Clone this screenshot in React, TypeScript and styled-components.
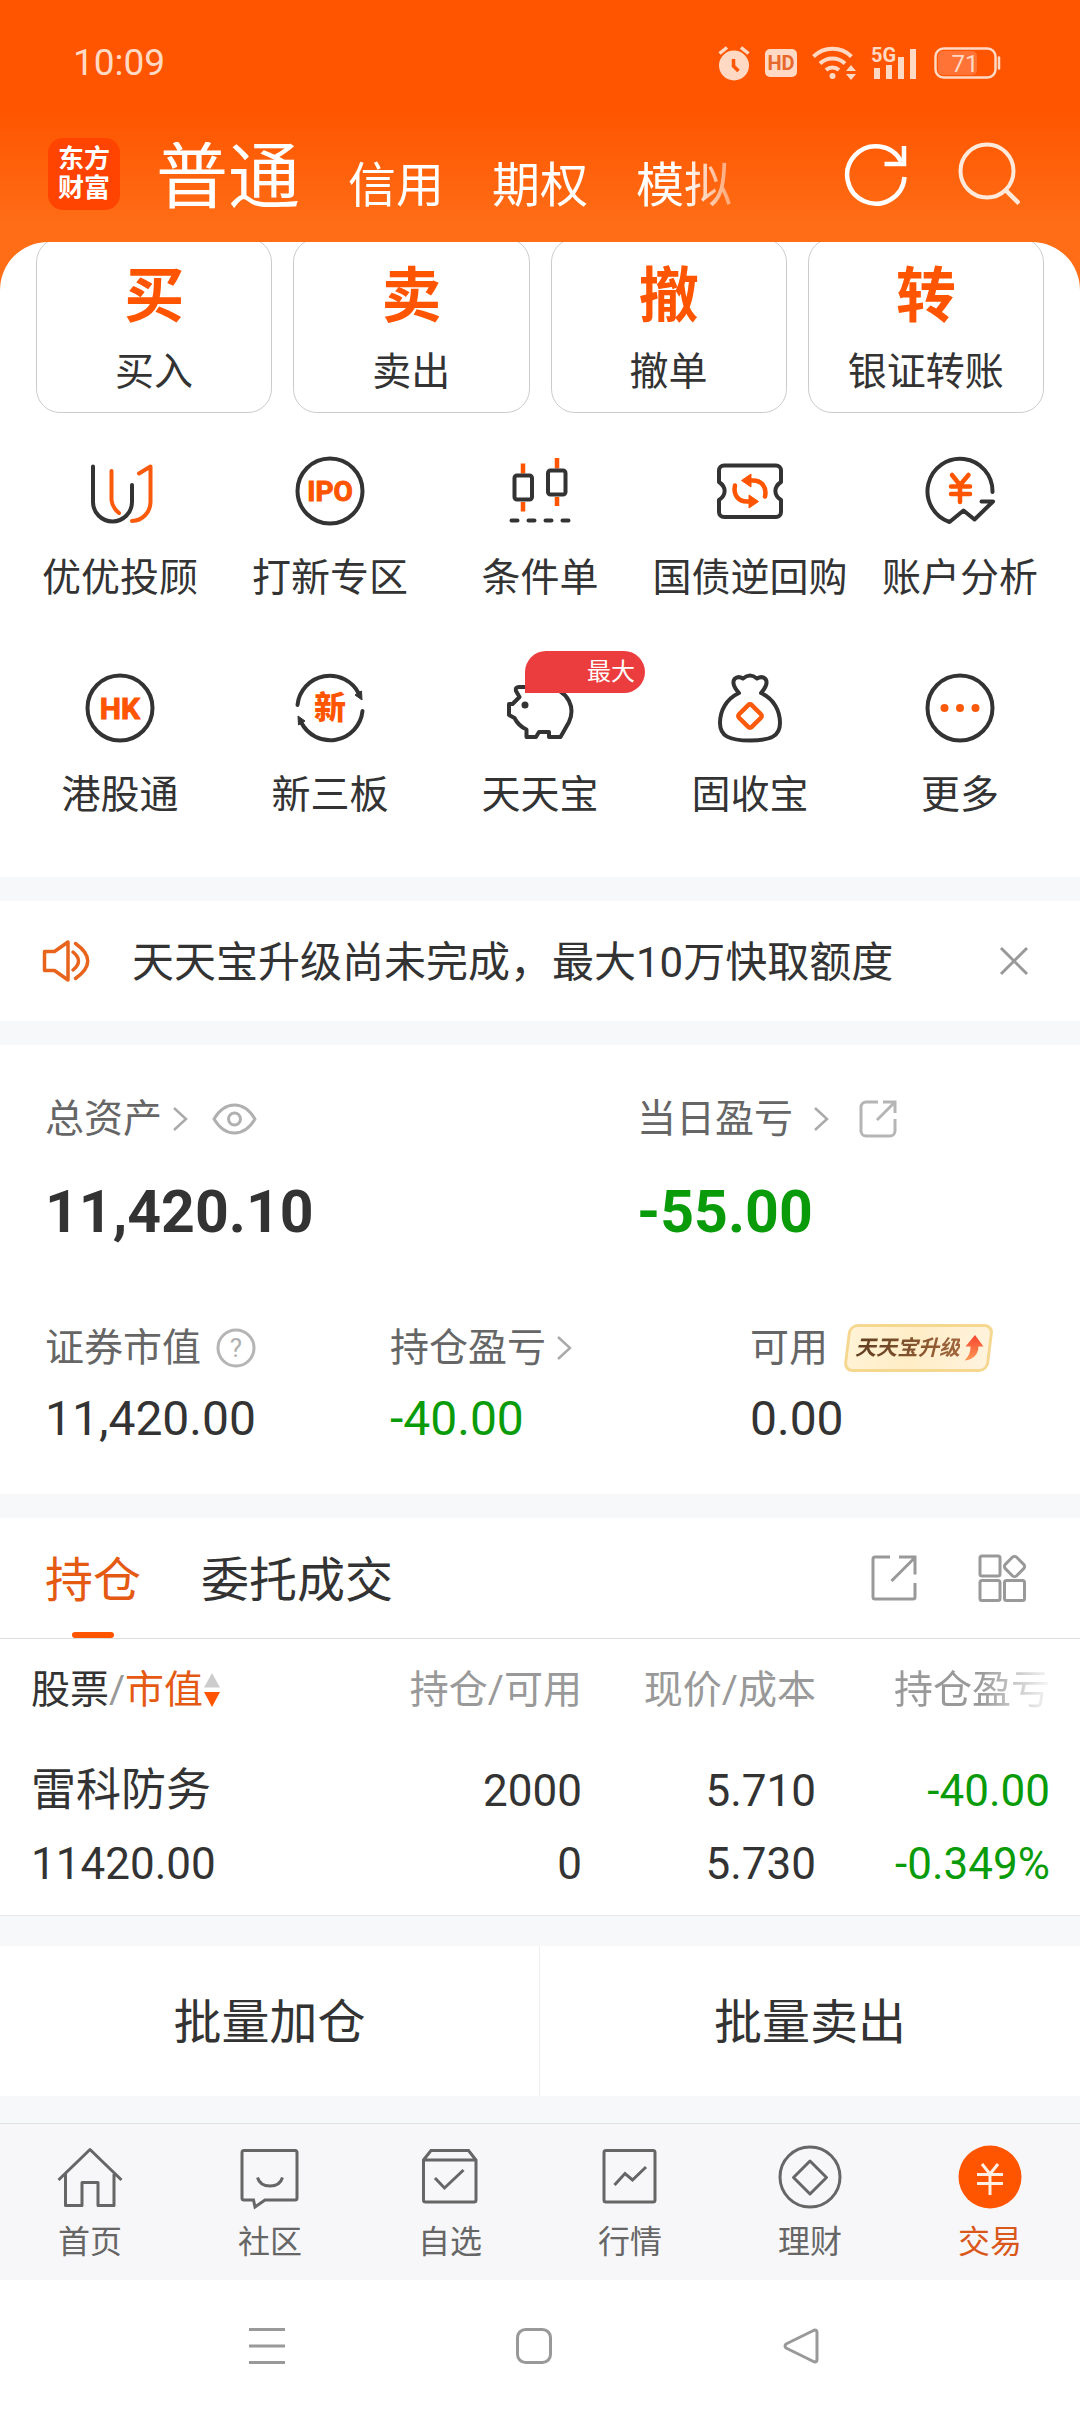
import React from 'react';
import styled, { createGlobalStyle, css } from 'styled-components';

const color = {
  brand: '#ff5500',
  brandText: '#e55a12',
  ink: '#333333',
  label: '#666666',
  muted: '#999999',
  line: '#dddddd',
  gap: '#f7f8fa',
  fall: '#0a9b0a',
  status: '#ffd9c4',
};

const GlobalStyle = createGlobalStyle`
  * { box-sizing: border-box; }
  body {
    margin: 0;
    background: #ffffff;
    color: ${color.ink};
    font-family: Roboto, "Noto Sans CJK SC", sans-serif;
    font-size: 39px;
    line-height: 48px;
  }
  button {
    margin: 0;
    padding: 0;
    border: 0;
    background: none;
    color: inherit;
    font: inherit;
    cursor: pointer;
  }
  a { color: inherit; text-decoration: none; }
  svg { display: block; flex: none; }
  svg text { font-family: Roboto, "Noto Sans CJK SC", sans-serif; }
`;

const Page = styled.div`
  display: flex;
  flex-direction: column;
  background: ${color.gap};
`;

/* ---------- header ---------- */

const Hero = styled.header`
  background: linear-gradient(180deg, #ff5500 0, #ff5500 110px, #ff6e17 230px, #ff6e17 100%);
`;

const StatusBar = styled.div`
  display: flex;
  align-items: center;
  justify-content: space-between;
  padding: 39px 79px 39px 73px;
  color: ${color.status};
  font-size: 37px;
`;

const StatusIcons = styled.div`
  display: flex;
  align-items: center;
  gap: 15px;
`;

const TopBar = styled.div`
  display: flex;
  align-items: center;
  height: 96px;
  padding: 0 60px 0 48px;
  color: #ffffff;
`;

const Logo = styled.a`
  display: grid;
  place-content: center;
  width: 72px;
  height: 72px;
  margin-right: 36px;
  border-radius: 15px;
  background: #ff4300;
  font-size: 26px;
  font-weight: 700;
  line-height: 29px;
  text-align: center;
`;

const AccountTabs = styled.nav`
  display: flex;
  align-items: baseline;
  align-self: flex-end;
  gap: 48px;
  line-height: 72px;
  mask-image: linear-gradient(90deg, #000 calc(100% - 48px), rgba(0, 0, 0, 0.4));
`;

const AccountTab = styled.button<{ $active?: boolean }>`
  font-size: ${(p) => (p.$active ? 72 : 48)}px;
  white-space: nowrap;
`;

const TopActions = styled.div`
  display: flex;
  gap: 48px;
  margin-left: auto;
`;

const HeroFoot = styled.div`
  height: 20px;
`;

/* ---------- shortcuts ---------- */

const PanelBack = styled.div`
  background: #ff6e17;
`;

const ShortcutPanel = styled.section`
  overflow: hidden;
  padding-bottom: 58px;
  border-radius: 48px 48px 0 0;
  background: #ffffff;
`;

const TradeCards = styled.div`
  display: grid;
  grid-template-columns: repeat(4, 1fr);
  gap: 21px;
  margin-top: -4px;
  padding: 0 36px;
`;

const TradeCard = styled.button`
  display: flex;
  flex-direction: column;
  align-items: center;
  gap: 19px;
  padding: 26px 0 16px;
  border: 1px solid #cccccc;
  border-radius: 24px;
`;

const TradeGlyph = styled.span`
  color: ${color.brand};
  font-size: 60px;
  font-weight: 700;
  line-height: 64px;
`;

const ToolGrid = styled.div`
  display: grid;
  grid-template-columns: repeat(5, 1fr);
  row-gap: 70px;
  margin-top: 42px;
  padding: 0 15px;
`;

const Tool = styled.button`
  display: flex;
  flex-direction: column;
  align-items: center;
  gap: 27px;
  white-space: nowrap;
`;

const ToolIcon = styled.span`
  position: relative;
`;

const ToolBadge = styled.span`
  position: absolute;
  top: -21px;
  left: 21px;
  width: 120px;
  padding-right: 10px;
  border-radius: 21px 21px 21px 0;
  background: #eb3d3d;
  color: #ffffff;
  font-size: 24px;
  line-height: 42px;
  text-align: right;
`;

/* ---------- notice ---------- */

const Notice = styled.section`
  display: flex;
  align-items: center;
  height: 120px;
  margin: 24px 0;
  padding: 0 48px 0 42px;
  background: #ffffff;
  font-size: 42px;
`;

const NoticeText = styled.p`
  flex: 1;
  margin: 0 0 0 42px;
  padding-top: 3px;
`;

/* ---------- assets ---------- */

const Assets = styled.section`
  display: flex;
  flex-direction: column;
  gap: 76px;
  padding: 50px 0 45px 45px;
  background: #ffffff;
`;

const AssetRow = styled.div<{ $columns: string }>`
  display: grid;
  grid-template-columns: ${(p) => p.$columns};
`;

const AssetLabel = styled.div<{ $gap?: number }>`
  display: flex;
  align-items: center;
  gap: ${(p) => p.$gap ?? 18}px;
  color: ${color.label};
`;

const AssetLink = styled.button<{ $gap?: number }>`
  display: flex;
  align-items: center;
  gap: ${(p) => p.$gap ?? 12}px;
`;

const fallColor = css<{ $fall?: boolean }>`
  color: ${(p) => (p.$fall ? color.fall : color.ink)};
`;

const Total = styled.div<{ $fall?: boolean }>`
  ${fallColor}
  margin-top: 33px;
  font-size: 59px;
  font-weight: 700;
  line-height: 72px;
`;

const Amount = styled.div<{ $fall?: boolean }>`
  ${fallColor}
  margin-top: 17px;
  font-size: 48px;
  line-height: 60px;
`;

const Upgrade = styled.button`
  position: relative;
  z-index: 0;
  display: flex;
  align-items: center;
  gap: 4px;
  height: 48px;
  padding: 0 10px 0 12px;

  &::before {
    content: '';
    position: absolute;
    inset: 0 3px;
    z-index: -1;
    border: 3px solid #f6d78f;
    border-radius: 9px;
    background: linear-gradient(100deg, #fff3d6, #ffedc6 45%, #fff3de);
    transform: skewX(-7deg);
  }
`;

const UpgradeText = styled.span`
  background: linear-gradient(90deg, #5f3d1f, #a1663a);
  background-clip: text;
  color: transparent;
  font-size: 21px;
  font-style: italic;
  font-weight: 700;
  line-height: 42px;
`;

/* ---------- holdings ---------- */

const Holdings = styled.section`
  margin-top: 24px;
  border-bottom: 1px solid #e8e8e8;
  background: #ffffff;
`;

const HoldingTabs = styled.div`
  display: flex;
  align-items: center;
  gap: 60px;
  padding: 0 54px 0 45px;
  border-bottom: 1px solid ${color.line};
`;

const HoldingTab = styled.button<{ $active?: boolean }>`
  position: relative;
  height: 120px;
  padding-top: 5px;
  color: ${(p) => (p.$active ? color.brandText : color.ink)};
  font-size: 48px;

  ${(p) =>
    p.$active &&
    css`
      &::after {
        content: '';
        position: absolute;
        bottom: 0;
        left: calc(50% - 21px);
        width: 42px;
        height: 6px;
        border-radius: 3px;
        background: ${color.brand};
      }
    `}
`;

const Spacer = styled.span`
  flex: 1;
`;

const Table = styled.table`
  width: 100%;
  border-collapse: collapse;
  table-layout: fixed;
`;

const HeadCell = styled.th<{ $fade?: boolean }>`
  width: ${(p) => (p.$fade ? '24.45%' : '21.67%')};
  padding: 27px ${(p) => (p.$fade ? 30 : 0)}px 0 0;
  color: ${color.muted};
  font-weight: 400;
  text-align: right;
  white-space: nowrap;
  ${(p) =>
    p.$fade &&
    css`
      mask-image: linear-gradient(90deg, #000 calc(100% - 100px), transparent calc(100% - 24px));
    `}

  &:first-child {
    width: auto;
    padding-left: 31px;
    text-align: left;
  }
`;

const SortButton = styled.button`
  display: flex;
  align-items: center;
  color: ${color.muted};
`;

const Ink = styled.span`
  color: ${color.ink};
`;

const SortKey = styled.span`
  color: ${color.brandText};
`;

const Cell = styled.td<{ $fall?: boolean }>`
  ${fallColor}
  padding: 47px 0 21px;
  font-size: 44px;
  line-height: 60px;
  text-align: right;

  &:first-child {
    padding-left: 31px;
    text-align: left;
  }
  &:last-child {
    padding-right: 30px;
  }
`;

const Stack = styled.div`
  display: grid;
  gap: 13px;
`;

const StockName = styled.span`
  font-size: 45px;
`;

const Batch = styled.div`
  display: grid;
  grid-template-columns: 1fr 1fr;
  margin: 30px 0 27px;
  background: #ffffff;
`;

const BatchButton = styled.button`
  padding: 41px 0 37px;
  font-size: 48px;
  line-height: 72px;

  &:first-child {
    border-right: 1px solid #eeeeee;
  }
`;

/* ---------- bottom bars ---------- */

const BottomNav = styled.nav`
  display: grid;
  grid-template-columns: repeat(6, 1fr);
  padding: 20px 0 18px;
  border-top: 1px solid #e2e2e4;
  background: #f7f7f9;
`;

const NavItem = styled.a<{ $active?: boolean }>`
  display: flex;
  flex-direction: column;
  align-items: center;
  gap: 12px;
  color: ${(p) => (p.$active ? '#d9581a' : color.label)};
  font-size: 32px;
  line-height: 40px;
`;

const SystemBar = styled.div`
  display: flex;
  justify-content: center;
  gap: 231px;
  padding: 48px 12px 48px 0;
  background: #ffffff;
`;

/* ---------- drawings ---------- */

const stroke = (c: string, w: number) => ({
  fill: 'none',
  stroke: c,
  strokeWidth: w,
  strokeLinecap: 'round' as const,
  strokeLinejoin: 'round' as const,
});

const sharp = (c: string, w: number) => ({ fill: 'none', stroke: c, strokeWidth: w });

const AlarmIcon = () => (
  <svg width="32" height="36" viewBox="0 0 32 36">
    <circle cx="16" cy="20.500" r="15" fill={color.status} />
    <path d="M1.500 8.500 9 2.500M30.500 8.500 23 2.500" {...sharp(color.status, 3.5)} />
    <path d="M15.500 14v7l5 5" {...sharp(color.brand, 3.5)} />
  </svg>
);

const HdIcon = () => (
  <svg width="32" height="28" viewBox="0 0 32 28">
    <rect width="32" height="28" rx="5" fill={color.status} />
    <text x="16" y="21" textAnchor="middle" fontSize="20" fontWeight="700" fill="#e8672c">
      HD
    </text>
  </svg>
);

const WifiIcon = () => (
  <svg width="44" height="36" viewBox="0 0 44 36">
    <path d="M1.500 11.500a27 27 0 0 1 38 0M8 18.500a18 18 0 0 1 25 0M14 25a10 10 0 0 1 13 0" {...sharp(color.status, 4)} />
    <circle cx="20.500" cy="31" r="3" fill={color.status} />
    <path d="M34 26l5-6 5 6zM34 29l5 6 5-6z" fill={color.status} />
  </svg>
);

const SignalIcon = () => (
  <svg width="48" height="44" viewBox="0 -5 48 44">
    <text x="0" y="16" fontSize="20" fontWeight="700" fill={color.status}>
      5G
    </text>
    <path d="M3 22h6v11H3zM15 19h6v14h-6zM27 11h6v22h-6zM39 3h6v30h-6z" fill={color.status} />
  </svg>
);

const BatteryIcon = () => (
  <svg width="67" height="32" viewBox="0 0 67 32">
    <rect x="1.500" y="1.500" width="60" height="29" rx="8" {...sharp(color.status, 2.5)} />
    <rect x="4" y="4" width="39" height="24" rx="5" fill="#ff7436" />
    <path d="M65 10.500v11" {...stroke(color.status, 2.5)} />
    <text x="31" y="24.500" textAnchor="middle" fontSize="24" fill={color.status}>
      71
    </text>
  </svg>
);

const RefreshIcon = () => (
  <svg width="64" height="66" viewBox="0 -1 64 66">
    <path d="M60.500 35A28.700 28.700 0 1 1 57.300 19.600" {...sharp('#fff', 4.5)} />
    <path d="M60 4V22H40.500" {...sharp('#fff', 4.5)} />
  </svg>
);

const SearchIcon = () => (
  <svg width="64" height="66" viewBox="0 -1 64 66">
    <circle cx="31" cy="29" r="26.500" {...sharp('#ffe9da', 4)} />
    <path d="M49.500 48 63 61.500" {...sharp('#ffe9da', 4.5)} />
  </svg>
);

const Tile = ({ children }: { children: React.ReactNode }) => (
  <svg width="72" height="72" viewBox="0 0 72 72">
    {children}
  </svg>
);

const dark = stroke(color.ink, 4);
const orange = stroke('#f95a0c', 4);

const AdvisorIcon = () => (
  <Tile>
    <path d="M9 11.500V47a19.500 19.500 0 0 0 39 0V30" {...dark} />
    <path d="M27.500 16V45q1 8 7.500 13M55 18.500l11.500-7V47a19 19 0 0 1-18.500 19" {...orange} />
  </Tile>
);

const IpoIcon = () => (
  <Tile>
    <circle cx="36" cy="36" r="32.500" {...dark} />
    <text x="36" y="46" textAnchor="middle" fontSize="28" fontWeight="700" fill={color.brand} stroke={color.brand} strokeLinejoin="round">
      IPO
    </text>
  </Tile>
);

const CandleIcon = () => (
  <Tile>
    <path d="M19 8.500v10M19 47v9.500M53 3v10.500M53 42v9" {...stroke(color.brand, 4.5)} strokeLinecap="butt" />
    <rect x="10.500" y="20.500" width="17.500" height="24" rx="2.500" {...dark} />
    <rect x="44" y="15.500" width="17.500" height="24" rx="2.500" {...dark} />
    <path d="M7.500 65.500h6M24.500 65.500h6M41.500 65.500h6M58.500 65.500h6" {...dark} />
  </Tile>
);

const RepoIcon = () => (
  <Tile>
    <path
      d="M10 10.500H62a5 5 0 0 1 5 5V27c-7.500 5-7.500 13 0 18V57a5 5 0 0 1-5 5H10a5 5 0 0 1-5-5V45c7.500-5 7.500-13 0-18V15.500a5 5 0 0 1 5-5z"
      {...dark}
    />
    {[0, 180].map((a) => (
      <g key={a} transform={`rotate(${a} 36 36)`}>
        <path d="M35 25.500h4c9 0 14 7 12 16" {...stroke(color.brand, 4.5)} />
        <path d="M27.500 25.500 37 19v13z" fill={color.brand} stroke={color.brand} strokeLinejoin="round" />
      </g>
    ))}
  </Tile>
);

const AnalysisIcon = () => (
  <Tile>
    <path d="M68.500 37A32.500 32.500 0 1 0 25.500 67L39.500 55.500 50.500 64.500 69 46.500H57.500" {...dark} />
    <path d="M28 20l8 10 8.500-10M27 31.500h19M27 39h19M36 31v16" {...stroke(color.brand, 4.5)} />
  </Tile>
);

const HkIcon = () => (
  <Tile>
    <circle cx="36" cy="36" r="32.500" {...dark} />
    <text x="36" y="46.500" textAnchor="middle" fontSize="30" fontWeight="700" fill={color.brand} stroke={color.brand} strokeLinejoin="round">
      HK
    </text>
  </Tile>
);

const NewBoardIcon = () => (
  <Tile>
    {[0, 180].map((a) => (
      <g key={a} transform={`rotate(${a} 36 36)`}>
        <path d="M3.500 33A32.500 32.500 0 0 1 65 22" {...dark} />
        <path d="M61 23l6.500-4 .5 9z" fill={color.ink} stroke={color.ink} strokeLinejoin="round" />
      </g>
    ))}
    <text x="36" y="47" textAnchor="middle" fontSize="32" fontWeight="900" fill={color.brand}>
      新
    </text>
  </Tile>
);

const PiggyIcon = () => (
  <Tile>
    <path
      d="M30 15H15q-4 0-3 4l3.500 6-7 7H5v11l5.500 3q4 8 12 11.500V65H32l3-5H45v5H56.500L65 50q5-11 0-21Q59 17 43 15z"
      {...dark}
    />
    <circle cx="21" cy="33" r="3.500" fill={color.ink} />
  </Tile>
);

const BagIcon = () => (
  <Tile>
    <path
      d="M25 21Q17 12 20.500 7 24 3.500 29 6.500 36 .5 43 6.500 48 3.500 51.500 7 55 12 47 21C60 27 66 39 66 51 66 64 57 68.500 36 68.500S6 64 6 51C6 39 12 27 25 21z"
      {...dark}
    />
    <rect x="27" y="35" width="18" height="18" rx="2.500" transform="rotate(45 36 44)" {...stroke('#f95a0c', 4.5)} />
  </Tile>
);

const MoreIcon = () => (
  <Tile>
    <circle cx="36" cy="36" r="32.500" {...dark} />
    {[20.5, 36, 51.5].map((x) => (
      <circle key={x} cx={x} cy="36" r="4" fill="#f95a0c" />
    ))}
  </Tile>
);

const SpeakerIcon = () => (
  <svg width="48" height="48" viewBox="0 0 48 48">
    <path d="M2.500 14.500H12.500L26 5V43L12.500 33.500H2.500z" {...stroke('#e8641c', 3.5)} />
    <path d="M33.500 6.500Q58 24 33.500 41.500M31 15Q42 24 31 33" {...stroke('#e8641c', 3.5)} />
  </svg>
);

const CloseIcon = () => (
  <svg width="36" height="36" viewBox="0 0 36 36">
    <path d="M5 5 31 31M31 5 5 31" {...sharp('#999', 3)} />
  </svg>
);

const Chevron = () => (
  <svg width="16" height="26" viewBox="0 0 16 26">
    <path d="M2 2 14 13 2 24" {...sharp('#aaa', 2.5)} />
  </svg>
);

const EyeIcon = () => (
  <svg width="45" height="32" viewBox="0 0 45 32">
    <path d="M2 16C8 6 15 2 22.500 2S37 6 43 16C37 26 30 30 22.500 30S8 26 2 16z" {...stroke('#b0b0b0', 3)} />
    <circle cx="22.500" cy="16" r="6" {...sharp('#b0b0b0', 3)} />
  </svg>
);

const ShareSmallIcon = () => (
  <svg width="38" height="38" viewBox="0 0 38 38">
    <path d="M19 2H7a5 5 0 0 0-5 5V31a5 5 0 0 0 5 5H31a5 5 0 0 0 5-5V19" {...sharp('#b5b5b5', 3)} />
    <path d="M24 2H36V13M18 20 35.500 2.500" {...sharp('#b5b5b5', 3)} />
  </svg>
);

const HelpIcon = () => (
  <svg width="40" height="40" viewBox="0 0 40 40">
    <circle cx="20" cy="20" r="18" {...sharp('#b5b5b5', 3)} />
    <text x="20" y="29" textAnchor="middle" fontSize="26" fill="#b0b0b0">
      ?
    </text>
  </svg>
);

const UpArrowIcon = () => (
  <svg width="20" height="26" viewBox="0 0 20 26">
    <defs>
      <linearGradient id="up" x1="0" y1="0" x2="0" y2="1">
        <stop offset="0" stopColor="#f5432f" />
        <stop offset="1" stopColor="#ff9a55" />
      </linearGradient>
    </defs>
    <path d="M11 0 19.500 11.500H14.500C14.500 18 10 25 .5 25.500 5 21 6.500 17 6.500 11.500H1.500z" fill="url(#up)" />
  </svg>
);

const ShareIcon = () => (
  <svg width="48" height="48" viewBox="0 0 48 48">
    <path d="M20 3H5a2 2 0 0 0-2 2V43a2 2 0 0 0 2 2H43a2 2 0 0 0 2-2V29" {...sharp('#999', 3)} />
    <path d="M29 3H45V20.500M21.500 27 44.500 4" {...sharp('#999', 3)} />
  </svg>
);

const WidgetsIcon = () => (
  <svg width="48" height="48" viewBox="0 0 48 48">
    <rect x="2" y="2" width="20" height="20" rx="2" {...sharp('#999', 3)} />
    <rect x="2" y="26.500" width="20" height="20" rx="2" {...sharp('#999', 3)} />
    <rect x="26.500" y="26.500" width="20" height="20" rx="2" {...sharp('#999', 3)} />
    <rect x="28.500" y="4.500" width="16" height="16" rx="3" transform="rotate(45 36.500 12.500)" {...sharp('#999', 3)} />
  </svg>
);

const SortIcon = () => (
  <svg width="18" height="36" viewBox="0 0 18 36">
    <path d="M9 1 17 15.500H1z" fill="#cccccc" />
    <path d="M1 20H17L9 35z" fill={color.brand} />
  </svg>
);

const navStroke = sharp('#666', 3);

const NavSvg = ({ children }: { children: React.ReactNode }) => (
  <svg width="66" height="66" viewBox="0 0 66 66">
    {children}
  </svg>
);

const HomeIcon = () => (
  <NavSvg>
    <path d="M1.500 36 33 5.500 64.500 36M8.500 30V61.500H25V38.500H41V61.500H57V30" {...navStroke} strokeLinejoin="round" />
  </NavSvg>
);

const CommunityIcon = () => (
  <NavSvg>
    <path d="M7 6.500H58a2 2 0 0 1 2 2V54a2 2 0 0 1-2 2H28L18 63 16.500 56H7a2 2 0 0 1-2-2V8.500a2 2 0 0 1 2-2zM20.500 33.500Q23 42 33 42T45.500 33.500" {...navStroke} />
  </NavSvg>
);

const WatchIcon = () => (
  <NavSvg>
    <path d="M6.500 16 14 6.500H51.500L59 16V56a2 2 0 0 1-2 2H8.500a2 2 0 0 1-2-2zM6.500 16H59M18 34l9.500 10L46.500 26" {...navStroke} />
  </NavSvg>
);

const MarketIcon = () => (
  <NavSvg>
    <rect x="7" y="6.500" width="51" height="51.500" rx="2" {...navStroke} />
    <path d="M17.500 41 28 29.500 35.500 36 49 23" {...navStroke} />
  </NavSvg>
);

const WealthIcon = () => (
  <NavSvg>
    <circle cx="33" cy="33" r="30" {...navStroke} />
    <path d="M33 17 49.500 33.500 33 50 16.500 33.500z" {...navStroke} strokeLinejoin="round" />
  </NavSvg>
);

const TradeIcon = () => (
  <NavSvg>
    <circle cx="33" cy="33" r="31.500" fill={color.brand} />
    <path d="M25 20l8 10 8-10M20 30.500H46M20 39.500H46M33 30V51" {...sharp('#fff0e6', 3)} />
  </NavSvg>
);

const sys = stroke('#999', 3);

/* ---------- data ---------- */

const trades = [
  ['买', '买入'],
  ['卖', '卖出'],
  ['撤', '撤单'],
  ['转', '银证转账'],
];

const tools: { label: string; Icon: React.FC; badge?: string }[] = [
  { label: '优优投顾', Icon: AdvisorIcon },
  { label: '打新专区', Icon: IpoIcon },
  { label: '条件单', Icon: CandleIcon },
  { label: '国债逆回购', Icon: RepoIcon },
  { label: '账户分析', Icon: AnalysisIcon },
  { label: '港股通', Icon: HkIcon },
  { label: '新三板', Icon: NewBoardIcon },
  { label: '天天宝', Icon: PiggyIcon, badge: '最大' },
  { label: '固收宝', Icon: BagIcon },
  { label: '更多', Icon: MoreIcon },
];

const navItems: { label: string; Icon: React.FC; active?: boolean }[] = [
  { label: '首页', Icon: HomeIcon },
  { label: '社区', Icon: CommunityIcon },
  { label: '自选', Icon: WatchIcon },
  { label: '行情', Icon: MarketIcon },
  { label: '理财', Icon: WealthIcon },
  { label: '交易', Icon: TradeIcon, active: true },
];

export default function App() {
  return (
    <>
      <GlobalStyle />
      <Page>
        <Hero>
          <StatusBar>
            <span>10:09</span>
            <StatusIcons>
              <AlarmIcon />
              <HdIcon />
              <WifiIcon />
              <SignalIcon />
              <BatteryIcon />
            </StatusIcons>
          </StatusBar>
          <TopBar>
            <Logo href="#">
              东方
              <br />
              财富
            </Logo>
            <AccountTabs>
              <AccountTab $active>普通</AccountTab>
              <AccountTab>信用</AccountTab>
              <AccountTab>期权</AccountTab>
              <AccountTab>模拟</AccountTab>
            </AccountTabs>
            <TopActions>
              <button aria-label="刷新">
                <RefreshIcon />
              </button>
              <button aria-label="搜索">
                <SearchIcon />
              </button>
            </TopActions>
          </TopBar>
          <HeroFoot />
        </Hero>

        <PanelBack>
          <ShortcutPanel>
            <TradeCards>
              {trades.map(([glyph, label]) => (
                <TradeCard key={label}>
                  <TradeGlyph>{glyph}</TradeGlyph>
                  <span>{label}</span>
                </TradeCard>
              ))}
            </TradeCards>
            <ToolGrid>
              {tools.map(({ label, Icon, badge }) => (
                <Tool key={label}>
                  <ToolIcon>
                    <Icon />
                    {badge && <ToolBadge>{badge}</ToolBadge>}
                  </ToolIcon>
                  <span>{label}</span>
                </Tool>
              ))}
            </ToolGrid>
          </ShortcutPanel>
        </PanelBack>

        <Notice>
          <SpeakerIcon />
          <NoticeText>天天宝升级尚未完成，最大10万快取额度</NoticeText>
          <button aria-label="关闭">
            <CloseIcon />
          </button>
        </Notice>

        <Assets>
          <AssetRow $columns="592fr 443fr">
            <div>
              <AssetLabel $gap={24}>
                <AssetLink $gap={10}>
                  总资产
                  <Chevron />
                </AssetLink>
                <button aria-label="隐藏金额">
                  <EyeIcon />
                </button>
              </AssetLabel>
              <Total>11,420.10</Total>
            </div>
            <div>
              <AssetLabel $gap={30}>
                <AssetLink $gap={20}>
                  当日盈亏
                  <Chevron />
                </AssetLink>
                <button aria-label="分享">
                  <ShareSmallIcon />
                </button>
              </AssetLabel>
              <Total $fall>-55.00</Total>
            </div>
          </AssetRow>
          <AssetRow $columns="345fr 360fr 330fr">
            <div>
              <AssetLabel $gap={15}>
                证券市值
                <button aria-label="说明">
                  <HelpIcon />
                </button>
              </AssetLabel>
              <Amount>11,420.00</Amount>
            </div>
            <div>
              <AssetLabel>
                <AssetLink $gap={10}>
                  持仓盈亏
                  <Chevron />
                </AssetLink>
              </AssetLabel>
              <Amount $fall>-40.00</Amount>
            </div>
            <div>
              <AssetLabel $gap={15}>
                可用
                <Upgrade>
                  <UpgradeText>天天宝升级</UpgradeText>
                  <UpArrowIcon />
                </Upgrade>
              </AssetLabel>
              <Amount>0.00</Amount>
            </div>
          </AssetRow>
        </Assets>

        <Holdings>
          <HoldingTabs>
            <HoldingTab $active>持仓</HoldingTab>
            <HoldingTab>委托成交</HoldingTab>
            <Spacer />
            <button aria-label="分享持仓">
              <ShareIcon />
            </button>
            <button aria-label="更多功能">
              <WidgetsIcon />
            </button>
          </HoldingTabs>
          <Table>
            <thead>
              <tr>
                <HeadCell>
                  <SortButton>
                    <Ink>股票</Ink>/<SortKey>市值</SortKey>
                    <SortIcon />
                  </SortButton>
                </HeadCell>
                <HeadCell>持仓/可用</HeadCell>
                <HeadCell>现价/成本</HeadCell>
                <HeadCell $fade>持仓盈亏</HeadCell>
              </tr>
            </thead>
            <tbody>
              <tr>
                <Cell>
                  <Stack>
                    <StockName>雷科防务</StockName>
                    <span>11420.00</span>
                  </Stack>
                </Cell>
                <Cell>
                  <Stack>
                    <span>2000</span>
                    <span>0</span>
                  </Stack>
                </Cell>
                <Cell>
                  <Stack>
                    <span>5.710</span>
                    <span>5.730</span>
                  </Stack>
                </Cell>
                <Cell $fall>
                  <Stack>
                    <span>-40.00</span>
                    <span>-0.349%</span>
                  </Stack>
                </Cell>
              </tr>
            </tbody>
          </Table>
        </Holdings>

        <Batch>
          <BatchButton>批量加仓</BatchButton>
          <BatchButton>批量卖出</BatchButton>
        </Batch>

        <BottomNav>
          {navItems.map(({ label, Icon, active }) => (
            <NavItem key={label} href="#" $active={active}>
              <Icon />
              {label}
            </NavItem>
          ))}
        </BottomNav>

        <SystemBar>
          <button aria-label="最近任务">
            <svg width="36" height="36" viewBox="0 0 36 36">
              <path d="M0 1.500H36M0 18H36M0 34.500H36" {...sharp('#999', 3)} />
            </svg>
          </button>
          <button aria-label="主屏幕">
            <svg width="36" height="36" viewBox="0 0 36 36">
              <rect x="1.500" y="1.500" width="33" height="33" rx="8" {...sys} />
            </svg>
          </button>
          <button aria-label="返回">
            <svg width="36" height="36" viewBox="0 0 36 36">
              <path d="M31.500 2 3 16q-2 2 0 4L31.500 34q2.500 0 2.500-2.500V4.500Q34 2 31.500 2z" {...sys} />
            </svg>
          </button>
        </SystemBar>
      </Page>
    </>
  );
}
